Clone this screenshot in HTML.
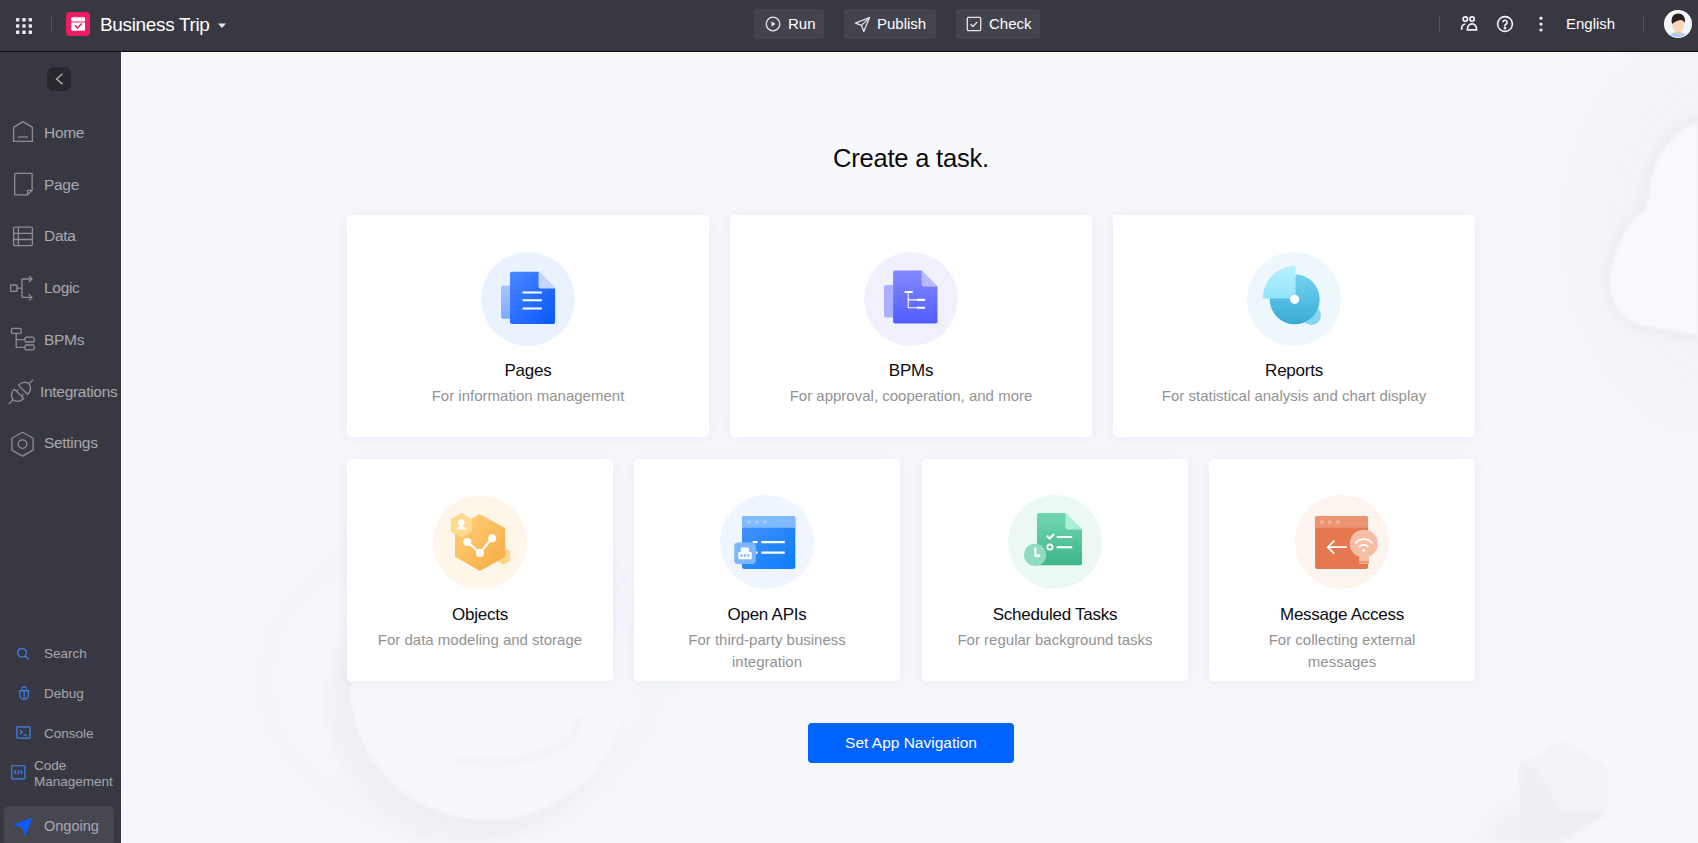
<!DOCTYPE html>
<html><head><meta charset="utf-8">
<style>
*{margin:0;padding:0;box-sizing:border-box}
html,body{width:1698px;height:843px;overflow:hidden;font-family:"Liberation Sans",sans-serif;background:#f7f8fc}
#hdr{position:absolute;left:0;top:0;width:1698px;height:52px;background:#383842;border-bottom:1px solid #0b0b0e}
#side{position:absolute;left:0;top:52px;width:121px;height:791px;background:#383842}
#main{position:absolute;left:121px;top:52px;width:1577px;height:791px;background:#f7f8fc;overflow:hidden}
.abs{position:absolute}
.t{position:absolute;white-space:nowrap;line-height:1}
.hbtn{position:absolute;top:9px;height:30px;background:#43434d;border-radius:4px}
.card{position:absolute;background:#fff;border-radius:4px;box-shadow:0 1px 14px rgba(200,205,222,.3)}
.circ{position:absolute;width:94px;height:94px;border-radius:50%}
.ctitle{position:absolute;left:0;width:100%;text-align:center;font-size:17px;color:#0c0c12;letter-spacing:-0.25px;line-height:1;white-space:nowrap}
.csub{position:absolute;left:0;width:100%;text-align:center;font-size:15px;color:#939393;line-height:22px}
.mi{position:absolute;left:44px;font-size:15.5px;letter-spacing:-0.3px;color:#a8a9b1;line-height:1;white-space:nowrap}
.bi{position:absolute;left:44px;font-size:13.5px;color:#a8a8af;line-height:1;white-space:nowrap}
</style></head>
<body>
<div id="hdr">
<svg class="abs" style="left:15px;top:17px" width="18" height="18" viewBox="0 0 18 18" fill="#e6e6ea">
<rect x="1" y="1" width="3.4" height="3.4" rx=".6"/><rect x="7.3" y="1" width="3.4" height="3.4" rx=".6"/><rect x="13.6" y="1" width="3.4" height="3.4" rx=".6"/>
<rect x="1" y="7.3" width="3.4" height="3.4" rx=".6"/><rect x="7.3" y="7.3" width="3.4" height="3.4" rx=".6"/><rect x="13.6" y="7.3" width="3.4" height="3.4" rx=".6"/>
<rect x="1" y="13.6" width="3.4" height="3.4" rx=".6"/><rect x="7.3" y="13.6" width="3.4" height="3.4" rx=".6"/><rect x="13.6" y="13.6" width="3.4" height="3.4" rx=".6"/>
</svg>
<div class="abs" style="left:51px;top:15px;width:1px;height:17px;background:#50505a"></div>
<svg class="abs" style="left:66px;top:12px" width="24" height="24" viewBox="0 0 24 24">
<rect width="24" height="24" rx="4" fill="#ec1d62"/>
<path d="M6.3 5.2h11.7a1 1 0 0 1 1 1v3.3H5.3V6.2a1 1 0 0 1 1-1z" fill="#fff"/>
<path d="M5.3 10.4h13.7v7.4a1 1 0 0 1-1 1H6.3a1 1 0 0 1-1-1z" fill="#fff"/>
<path d="M9.1 13.3l2.3 2.9 4.3-4.8" stroke="#ec1d62" stroke-width="1.5" fill="none"/>
<rect x="8.9" y="4.4" width="1" height="2.4" fill="#f6a0bd"/><rect x="15.2" y="4.4" width="1" height="2.4" fill="#f6a0bd"/>
</svg>
<div class="t" style="left:100px;top:14.5px;font-size:19px;color:#fff;letter-spacing:-0.35px">Business Trip</div>
<svg class="abs" style="left:217px;top:22px" width="10" height="8" viewBox="0 0 10 8"><path d="M1 1.5h8L5 6z" fill="#e6e6ea"/></svg>

<div class="hbtn" style="left:754px;width:70px"></div>
<svg class="abs" style="left:765px;top:16px" width="16" height="16" viewBox="0 0 16 16" fill="none" stroke="#e6e6ea" stroke-width="1.3"><circle cx="8" cy="8" r="6.8"/><path d="M6.5 5.3v5.4l4-2.7z" fill="#e6e6ea" stroke="none"/></svg>
<div class="t" style="left:788px;top:16px;font-size:15px;color:#fff">Run</div>

<div class="hbtn" style="left:844px;width:92px"></div>
<svg class="abs" style="left:854px;top:16px" width="17" height="17" viewBox="0 0 17 17" fill="none" stroke="#e6e6ea" stroke-width="1.3" stroke-linejoin="round"><path d="M15.5 1.5L1.5 7.2l6 2.2 2.3 6z"/><path d="M15.5 1.5L7.5 9.4"/></svg>
<div class="t" style="left:877px;top:16px;font-size:15px;color:#fff">Publish</div>

<div class="hbtn" style="left:956px;width:84px"></div>
<svg class="abs" style="left:966px;top:16px" width="16" height="16" viewBox="0 0 16 16" fill="none" stroke="#e6e6ea" stroke-width="1.3"><rect x="1.3" y="1.3" width="13.4" height="13.4" rx="1.2"/><path d="M4.6 8.2l2.4 2.3 4.3-4.6"/></svg>
<div class="t" style="left:989px;top:16px;font-size:15px;color:#fff">Check</div>

<div class="abs" style="left:1439px;top:15px;width:1px;height:18px;background:#50505a"></div>
<svg class="abs" style="left:1459px;top:14.4px" width="20" height="18" viewBox="0 0 20 18" fill="none" stroke="#f4f4f6" stroke-width="1.7"><circle cx="6.3" cy="5.1" r="2.2"/><circle cx="13.1" cy="5.1" r="2.2"/><path d="M2.6 15.8C2.4 12.4 3.8 10.3 6.3 10"/><path d="M8.4 15.8C8.2 12.2 10.3 9.9 13 9.9s4.8 2.3 4.6 5.9z"/></svg>
<svg class="abs" style="left:1496px;top:14.6px" width="18" height="18" viewBox="0 0 18 18" fill="none" stroke="#f4f4f6" stroke-width="1.6"><circle cx="9" cy="9" r="7.4"/><path d="M6.9 7.3a2.1 2.1 0 1 1 3 1.9c-.6.3-.9.8-.9 1.4v.6"/><circle cx="9" cy="13" r=".6" fill="#f4f4f6"/></svg>
<svg class="abs" style="left:1538px;top:15px" width="6" height="18" viewBox="0 0 6 18" fill="#ececf0"><circle cx="3" cy="3.2" r="1.6"/><circle cx="3" cy="9.1" r="1.6"/><circle cx="3" cy="15" r="1.6"/></svg>
<div class="t" style="left:1566px;top:16px;font-size:15px;color:#fff">English</div>
<div class="abs" style="left:1643px;top:15px;width:1px;height:18px;background:#50505a"></div>
<svg class="abs" style="left:1664px;top:10px" width="28" height="28" viewBox="0 0 28 28">
<defs><clipPath id="av"><circle cx="14" cy="14" r="13.1"/></clipPath></defs>
<circle cx="14" cy="14" r="14" fill="#fff"/>
<g clip-path="url(#av)"><rect width="28" height="28" fill="#f2f6fb"/>
<ellipse cx="14" cy="29.5" rx="10.5" ry="7.4" fill="#a6cdfb"/>
<rect x="11" y="19" width="6.2" height="5" rx="1" fill="#f6caa3"/>
<ellipse cx="14.1" cy="15.6" rx="6" ry="6.3" fill="#f9d7b6"/>
<path d="M8.1 13.9C6.5 9.5 8.5 3.6 14.2 3.6 19.5 3.6 22 8.5 20.6 13 19.5 11 18 10 16.4 10.1 13.5 10.3 11 12 8.1 13.9z" fill="#2a1f1a"/>
</g></svg>
</div>
<div id="side">
<div class="abs" style="left:47px;top:15px;width:24px;height:24px;border-radius:7px;background:#27272d"></div>
<svg class="abs" style="left:47px;top:15px" width="24" height="24" viewBox="0 0 24 24" fill="none" stroke="#a9a9b1" stroke-width="1.5"><path d="M15.5 6.7L9.6 12l5.9 5.1"/></svg>

<svg class="abs" style="left:12px;top:68px" width="22" height="22" viewBox="0 0 22 22" fill="none" stroke="#8d8d95" stroke-width="1.3" stroke-linejoin="round"><path d="M1.6 7.4L11 1.6l9.4 5.8v14H1.6z"/><path d="M6 17h10"/></svg>
<div class="mi" style="top:72.85px">Home</div>

<svg class="abs" style="left:12px;top:120px" width="22" height="24" viewBox="0 0 22 24" fill="none" stroke="#8d8d95" stroke-width="1.3" stroke-linejoin="round"><path d="M3.5 1.3h15.8a.8.8 0 0 1 .8.8v16.2l-4.5 4.6H3.5a.8.8 0 0 1-.8-.8V2.1a.8.8 0 0 1 .8-.8z"/><path d="M20.1 18.3h-3.7a.8.8 0 0 0-.8.8v3.8"/></svg>
<div class="mi" style="top:124.55px">Page</div>

<svg class="abs" style="left:12px;top:174px" width="22" height="21" viewBox="0 0 22 21" fill="none" stroke="#8d8d95" stroke-width="1.3"><rect x="1.6" y="1.2" width="18.8" height="18.4" rx="1"/><path d="M1.6 7.3h18.8M1.6 13.5h18.8M6.4 1.2v18.4"/></svg>
<div class="mi" style="top:176.35px">Data</div>

<svg class="abs" style="left:9px;top:223px" width="25" height="27" viewBox="0 0 25 27" fill="none" stroke="#8d8d95" stroke-width="1.3" stroke-linejoin="round"><rect x="1.6" y="10" width="6.4" height="6.4" rx=".6"/><path d="M8 13.2h5M13 4v18.4M13 4h10M13 22.4h10M19.8 1l3.2 3-3.2 3M19.8 19.4l3.2 3-3.2 3"/></svg>
<div class="mi" style="top:228.05px">Logic</div>

<svg class="abs" style="left:10px;top:275px" width="27" height="25" viewBox="0 0 27 25" fill="none" stroke="#8d8d95" stroke-width="1.3"><rect x="1.5" y="1.4" width="9.6" height="5" rx="1.2"/><rect x="15" y="10.2" width="9.2" height="4.8" rx="1.2"/><rect x="15" y="18" width="9.2" height="4.8" rx="1.2"/><path d="M6.2 6.4v14h8.8M6.2 12.6h8.8"/></svg>
<div class="mi" style="top:279.85px">BPMs</div>

<svg class="abs" style="left:4px;top:322px" width="34" height="36" viewBox="0 0 34 36" fill="none" stroke="#8d8d95" stroke-width="1.3" stroke-linejoin="round"><g transform="translate(17 17.8) rotate(-45)"><path d="M-2.8 -6.6V6.6A8.4 6.6 0 0 1 -2.8 -6.6z"/><path d="M2.8 -6.6V6.6A8.4 6.6 0 0 0 2.8 -6.6z"/><path d="M-2.8 -3.4H-.1M-2.8 3.4H-.1M-11.2 0H-17.4M11.2 0H17"/></g></svg>
<div class="mi" style="left:40px;top:331.65px">Integrations</div>

<svg class="abs" style="left:10px;top:379px" width="25" height="26" viewBox="0 0 25 26" fill="none" stroke="#8d8d95" stroke-width="1.3" stroke-linejoin="round"><path d="M12.5 1.2l10.6 6v11.9l-10.6 6-10.6-6V7.2z"/><circle cx="12.5" cy="13.1" r="4.3"/></svg>
<div class="mi" style="top:383.45px">Settings</div>

<svg class="abs" style="left:15.5px;top:595px" width="14.2" height="14.2" viewBox="0 0 16 16" fill="none" stroke="#3d86f5" stroke-width="1.4"><circle cx="6.8" cy="6.6" r="4.9"/><path d="M10.4 10.2l4 3.8"/></svg>
<div class="bi" style="top:594.5px">Search</div>

<svg class="abs" style="left:18px;top:633.7px" width="12.2" height="14" viewBox="0 0 14 16" fill="none" stroke="#3d86f5" stroke-width="1.3"><path d="M4.6 4V2.6a2.4 1.6 0 0 1 4.8 0V4"/><path d="M2.2 5.2h9.6v5.8a4 4 0 0 1-4 4H6.2a4 4 0 0 1-4-4z"/><path d="M7 5.2v9.8M2.2 6l-1.2.6M11.8 6l1.2.6"/></svg>
<div class="bi" style="top:634.5px">Debug</div>

<svg class="abs" style="left:16.2px;top:674.2px" width="15" height="13.1" viewBox="0 0 16 14" fill="none" stroke="#3d86f5" stroke-width="1.3"><rect x="1" y="1" width="14" height="12" rx=".5"/><path d="M4 4.4l2.6 2.3L4 9M7.8 9.6h3.6"/></svg>
<div class="bi" style="top:674.5px">Console</div>

<svg class="abs" style="left:11px;top:713.2px" width="14.6" height="14.6" viewBox="0 0 15 15" fill="none" stroke="#3d86f5" stroke-width="1.2"><rect x=".8" y=".8" width="13.4" height="13.4" rx=".5"/><path d="M5.3 5.6L3.4 7.5l1.9 1.9M9.7 5.6l1.9 1.9-1.9 1.9M8.2 5.2L6.8 9.8"/></svg>
<div class="bi" style="left:34px;top:706px;line-height:16px;white-space:normal;width:86px">Code<br>Management</div>

<div class="abs" style="left:4px;top:754px;width:110px;height:40px;border-radius:5px;background:#47474f"></div>
<svg class="abs" style="left:13px;top:765px" width="20" height="20" viewBox="0 0 20 20"><path d="M1.6 7.7L18.4 1.6 12.2 18.4 9.9 10.4z" fill="#0c5dff" stroke="#0c5dff" stroke-width="1.1" stroke-linejoin="round"/></svg>
<div class="mi" style="top:767px;font-size:14.5px;letter-spacing:0">Ongoing</div>
</div>
<div id="main"></div>
<svg class="abs" style="left:121px;top:52px" width="1577" height="791" viewBox="121 52 1577 791">
 <defs>
  <filter id="bl8" x="-50%" y="-50%" width="200%" height="200%"><feGaussianBlur stdDeviation="8"/></filter>
  <filter id="bl14" x="-50%" y="-50%" width="200%" height="200%"><feGaussianBlur stdDeviation="14"/></filter>
  <filter id="bl30" x="-50%" y="-50%" width="200%" height="200%"><feGaussianBlur stdDeviation="30"/></filter><filter id="bl6" x="-50%" y="-50%" width="200%" height="200%"><feGaussianBlur stdDeviation="6"/></filter><filter id="bl2" x="-50%" y="-50%" width="200%" height="200%"><feGaussianBlur stdDeviation="1.5"/></filter><filter id="bl4" x="-50%" y="-50%" width="200%" height="200%"><feGaussianBlur stdDeviation="3"/></filter>
 </defs>
 <!-- bottom-left torus -->
 <ellipse cx="460" cy="680" rx="195" ry="152" fill="none" stroke="#eceef4" stroke-width="16" filter="url(#bl14)" opacity=".6"/>
 <ellipse cx="472" cy="705" rx="146" ry="136" fill="#e7e9f0" filter="url(#bl8)" opacity=".5"/>
 <ellipse cx="488" cy="689" rx="137" ry="131" fill="#f7f8fb" filter="url(#bl2)"/>
 <path d="M455 759A88 42 0 0 0 578 716" fill="none" stroke="#eceef3" stroke-width="6" filter="url(#bl4)" opacity=".6"/>
 <!-- top-right shape -->
 <ellipse cx="1710" cy="230" rx="150" ry="210" fill="#eff1f6" filter="url(#bl30)" opacity=".6"/>
 <path d="M1698 122C1675 130 1660 150 1652 175 1648 190 1650 200 1645 210 1630 220 1618 240 1612 265 1606 290 1612 315 1640 325L1698 335z" fill="none" stroke="#e1e3ea" stroke-width="8" filter="url(#bl6)" opacity=".55"/>
 <path d="M1698 122C1675 130 1660 150 1652 175 1648 190 1650 200 1645 210 1630 220 1618 240 1612 265 1606 290 1612 315 1640 325L1698 335z" fill="#f8f9fc" filter="url(#bl2)"/>
 <!-- bottom-right polyhedron -->
 <g opacity=".75">
 <path d="M1470 843l50-40 60 40z" fill="#e6e8ef" filter="url(#bl14)"/>
 <path d="M1520 764l44-25 44 28v46l-50 30h-38l-0-0z" fill="#f1f2f7" filter="url(#bl2)"/>
 <path d="M1520 764l17 5 25 43 46 1-50 30h-38z" fill="#ebedf3" filter="url(#bl2)"/>
 </g>
</svg>
<div class="t" style="left:0;width:1822px;text-align:center;top:146px;font-size:25.5px;letter-spacing:-0.2px;color:#0c0c10">Create a task.</div>

<div class="card" style="left:347px;top:215px;width:362px;height:222px">
 <svg class="circ" style="left:134px;top:37px" viewBox="0 0 94 94">
  <defs><linearGradient id="gp1" x1="0" y1="0" x2="1" y2="1"><stop offset="0" stop-color="#4a86ff"/><stop offset="1" stop-color="#0758ff"/></linearGradient>
  <linearGradient id="gp0" x1="0" y1="0" x2="0" y2="1"><stop offset="0" stop-color="#a8c6ff"/><stop offset="1" stop-color="#7fa9ff"/></linearGradient></defs>
  <circle cx="47" cy="47" r="47" fill="#ebf2ff"/>
  <path d="M22 33.5h8v33.2h-8a2 2 0 0 1-2-2V35.5a2 2 0 0 1 2-2z" fill="url(#gp0)"/>
  <path d="M31 19.8h26.5L74.1 36.4V70a2 2 0 0 1-2 2H31a2 2 0 0 1-2-2V21.8a2 2 0 0 1 2-2z" fill="url(#gp1)"/>
  <path d="M57.5 19.8L74.1 36.4H60a2.5 2.5 0 0 1-2.5-2.5z" fill="#c3d7ff"/>
  <path d="M41.5 40.6h19.3M41.5 48.3h19.3M41.5 56.6h19.3" stroke="#fff" stroke-width="2"/>
 </svg>
 <div class="ctitle" style="top:147px">Pages</div>
 <div class="csub" style="top:170px">For information management</div>
</div>

<div class="card" style="left:730px;top:215px;width:362px;height:222px">
 <svg class="circ" style="left:134px;top:37px" viewBox="0 0 94 94">
  <defs><linearGradient id="gb1" x1="0" y1="0" x2="0" y2="1"><stop offset="0" stop-color="#8389ff"/><stop offset="1" stop-color="#525dff"/></linearGradient></defs>
  <circle cx="47" cy="47" r="47" fill="#f1f1fe"/>
  <path d="M22 32.9h7v32.6h-7a2 2 0 0 1-2-2V34.9a2 2 0 0 1 2-2z" fill="#aab0ff"/>
  <path d="M31.1 18.6h26.4l16 16.2v34.6a2 2 0 0 1-2 2H31.1a2 2 0 0 1-2-2V20.6a2 2 0 0 1 2-2z" fill="url(#gb1)"/>
  <path d="M57.5 18.6l16 16.2H61a3.5 3.5 0 0 1-3.5-3.5z" fill="#b6baff"/>
  <path d="M40.7 40h7.9M44.2 40v15.7M44.2 47.9h8.6M44.2 55.7h8.6" stroke="#fff" stroke-width="1.1"/>
  <path d="M40.7 40h7.9M52.8 47.9h8.3M52.8 55.7h8.3" stroke="#fff" stroke-width="2.1"/>
 </svg>
 <div class="ctitle" style="top:147px">BPMs</div>
 <div class="csub" style="top:170px">For approval, cooperation, and more</div>
</div>

<div class="card" style="left:1113px;top:215px;width:362px;height:222px">
 <svg class="circ" style="left:134px;top:37px" viewBox="0 0 94 94">
  <defs><linearGradient id="gr1" x1="0" y1="0" x2="0" y2="1"><stop offset="0" stop-color="#74d2ef"/><stop offset="1" stop-color="#38acd6"/></linearGradient>
  <linearGradient id="gr2" x1="0" y1="0" x2="0" y2="1"><stop offset="0" stop-color="#b8f1ff"/><stop offset="1" stop-color="#92e3fa"/></linearGradient></defs>
  <circle cx="47" cy="47" r="47" fill="#eef8fc"/>
  <circle cx="64.3" cy="63.4" r="9.6" fill="#86d6f1"/>
  <circle cx="47.7" cy="47.3" r="25" fill="url(#gr1)"/>
  <path d="M48.6 46.5H15.8A32.8 32.8 0 0 1 48.6 13.7z" fill="url(#gr2)"/>
  <circle cx="47.7" cy="47.3" r="4.6" fill="#fff"/>
 </svg>
 <div class="ctitle" style="top:147px">Reports</div>
 <div class="csub" style="top:170px">For statistical analysis and chart display</div>
</div>


<div class="card" style="left:347px;top:459px;width:266px;height:222px">
 <svg class="circ" style="left:86px;top:36px" viewBox="0 0 94 94">
  <defs><linearGradient id="go1" x1="0" y1="0" x2="1" y2="1"><stop offset="0" stop-color="#ffd27d"/><stop offset="1" stop-color="#f6aa42"/></linearGradient></defs>
  <circle cx="47" cy="47" r="47" fill="#fdf6e9"/>
  <path d="M70.6 52.4l6.5 3.8v9.7l-6.5 3.8-6.5-3.8v-9.7z" fill="#fdd68c"/>
  <path d="M46.9 19.1l25.3 14.2v28.4L46.9 75.9 22 61.7V33.3z" fill="url(#go1)"/>
  <path d="M28.4 17.9l10.5 6.1v12.4l-10.5 6.1-10.5-6.1V24z" fill="#ffd98c"/>
  <circle cx="28.2" cy="27.6" r="3.3" fill="#fff"/>
  <path d="M26.6 30.4h3.2l.6 1.6c1.8.3 3 1.2 3 2.4H23.4c0-1.2 1.2-2.1 3-2.4z" fill="#fff"/>
  <path d="M34.3 46.9L46.9 58 59.2 43.2" stroke="#fff" stroke-width="2.2" fill="none"/>
  <circle cx="34.3" cy="46.9" r="4" fill="#fff"/><circle cx="46.9" cy="58" r="4" fill="#fff"/><circle cx="59.2" cy="43.2" r="4" fill="#fff"/>
 </svg>
 <div class="ctitle" style="top:147px">Objects</div>
 <div class="csub" style="top:170px">For data modeling and storage</div>
</div>

<div class="card" style="left:634px;top:459px;width:266px;height:222px">
 <svg class="circ" style="left:86px;top:36px" viewBox="0 0 94 94">
  <defs><linearGradient id="ga1" x1="0" y1="0" x2="1" y2="1"><stop offset="0" stop-color="#4a94f6"/><stop offset="1" stop-color="#0a7cff"/></linearGradient></defs>
  <circle cx="47" cy="47" r="47" fill="#eff6ff"/>
  <path d="M24.5 21h48.3a2.5 2.5 0 0 1 2.5 2.5V71.5a2.5 2.5 0 0 1-2.5 2.5H24.5a2.5 2.5 0 0 1-2.5-2.5V23.5a2.5 2.5 0 0 1 2.5-2.5z" fill="url(#ga1)"/>
  <path d="M24.5 21h48.3a2.5 2.5 0 0 1 2.5 2.5v9.2H22v-9.2a2.5 2.5 0 0 1 2.5-2.5z" fill="#7fb9ff"/>
  <circle cx="29" cy="27.1" r="1.9" fill="#a9d0ff"/><circle cx="37" cy="27.1" r="1.9" fill="#a9d0ff"/><circle cx="45" cy="27.1" r="1.9" fill="#a9d0ff"/>
  <path d="M32.7 47.1h4.9M41.3 47.1h23.5M32.7 57.6h4.9M41.3 57.6h23.5" stroke="#fff" stroke-width="2.1"/>
  <rect x="14.2" y="47.5" width="21.6" height="21.6" rx="3.5" fill="#7db7ff"/>
  <path d="M21.6 52.4h6.6a.8.8 0 0 1 .8.8V57h2a.8.8 0 0 1 .8.8v5.6a.8.8 0 0 1-.8.8H19.1a.8.8 0 0 1-.8-.8v-5.6a.8.8 0 0 1 .8-.8h1.7v-3.8a.8.8 0 0 1 .8-.8z" fill="#fff"/>
  <rect x="20.5" y="59.2" width="2.2" height="2.6" rx=".6" fill="#7db7ff"/><rect x="23.9" y="59.2" width="2.2" height="2.6" rx=".6" fill="#7db7ff"/><rect x="27.3" y="59.2" width="2.2" height="2.6" rx=".6" fill="#7db7ff"/>
 </svg>
 <div class="ctitle" style="top:147px">Open APIs</div>
 <div class="csub" style="top:170px">For third-party business<br>integration</div>
</div>

<div class="card" style="left:922px;top:459px;width:266px;height:222px">
 <svg class="circ" style="left:86px;top:36px" viewBox="0 0 94 94">
  <defs><linearGradient id="gs1" x1="0" y1="0" x2="0" y2="1"><stop offset="0" stop-color="#72d7b2"/><stop offset="1" stop-color="#3db689"/></linearGradient></defs>
  <circle cx="47" cy="47" r="47" fill="#ecf8f3"/>
  <path d="M31 17.9h26.4L74 34.5v33.8a2 2 0 0 1-2 2H31a2 2 0 0 1-2-2V19.9a2 2 0 0 1 2-2z" fill="url(#gs1)"/>
  <path d="M57.4 17.9L74 34.5H61a3.6 3.6 0 0 1-3.6-3.6z" fill="#aaf0d7"/>
  <path d="M38.9 40.8l2.8 2.8 4.3-4.6M48.7 41.9h15.5M48.7 52.2h15.5" stroke="#fff" stroke-width="2" fill="none"/>
  <circle cx="41.9" cy="52.1" r="2.6" stroke="#fff" stroke-width="1.8" fill="none"/>
  <circle cx="27.1" cy="59.9" r="11.1" fill="#8fdcc0"/>
  <path d="M27.4 52.6v8h4.8" stroke="#fff" stroke-width="2.2" fill="none"/>
 </svg>
 <div class="ctitle" style="top:147px">Scheduled Tasks</div>
 <div class="csub" style="top:170px">For regular background tasks</div>
</div>

<div class="card" style="left:1209px;top:459px;width:266px;height:222px">
 <svg class="circ" style="left:86px;top:36px" viewBox="0 0 94 94">
  <circle cx="47" cy="47" r="47" fill="#fdf3ef"/>
  <path d="M22.6 21h47.9a2.5 2.5 0 0 1 2.5 2.5V71.5a2.5 2.5 0 0 1-2.5 2.5H22.6a2.5 2.5 0 0 1-2.5-2.5V23.5a2.5 2.5 0 0 1 2.5-2.5z" fill="#e5784f"/>
  <path d="M22.6 21h47.9a2.5 2.5 0 0 1 2.5 2.5v9.2H20.1v-9.2a2.5 2.5 0 0 1 2.5-2.5z" fill="#eb9573"/>
  <circle cx="26.9" cy="27.1" r="1.9" fill="#f3b79d"/><circle cx="34.8" cy="27.1" r="1.9" fill="#f3b79d"/><circle cx="42.9" cy="27.1" r="1.9" fill="#f3b79d"/>
  <path d="M51.8 52.2H33M39.2 45.8l-6.4 6.4 6.4 6.4" stroke="#fff" stroke-width="1.8" fill="none"/>
  <circle cx="68.8" cy="48.7" r="14" fill="#f6bea5"/>
  <rect x="64.2" y="58" width="9.8" height="11" fill="#f6bea5"/>
  <rect x="64.2" y="66.6" width="9.8" height="1" fill="#e5784f"/>
  <path d="M60.2 48.6a10.5 10.5 0 0 1 17.2 0M64 52a6.5 6.5 0 0 1 9.6 0" stroke="#fff" stroke-width="1.8" fill="none"/>
  <circle cx="68.8" cy="55.2" r="1.5" fill="#fff"/>
 </svg>
 <div class="ctitle" style="top:147px">Message Access</div>
 <div class="csub" style="top:170px">For collecting external<br>messages</div>
</div>

<div class="abs" style="left:808px;top:723px;width:206px;height:40px;border-radius:4px;background:#0062ff"></div>
<div class="t" style="left:808px;width:206px;text-align:center;top:734.6px;font-size:15.5px;color:#fff">Set App Navigation</div>
</body></html>
